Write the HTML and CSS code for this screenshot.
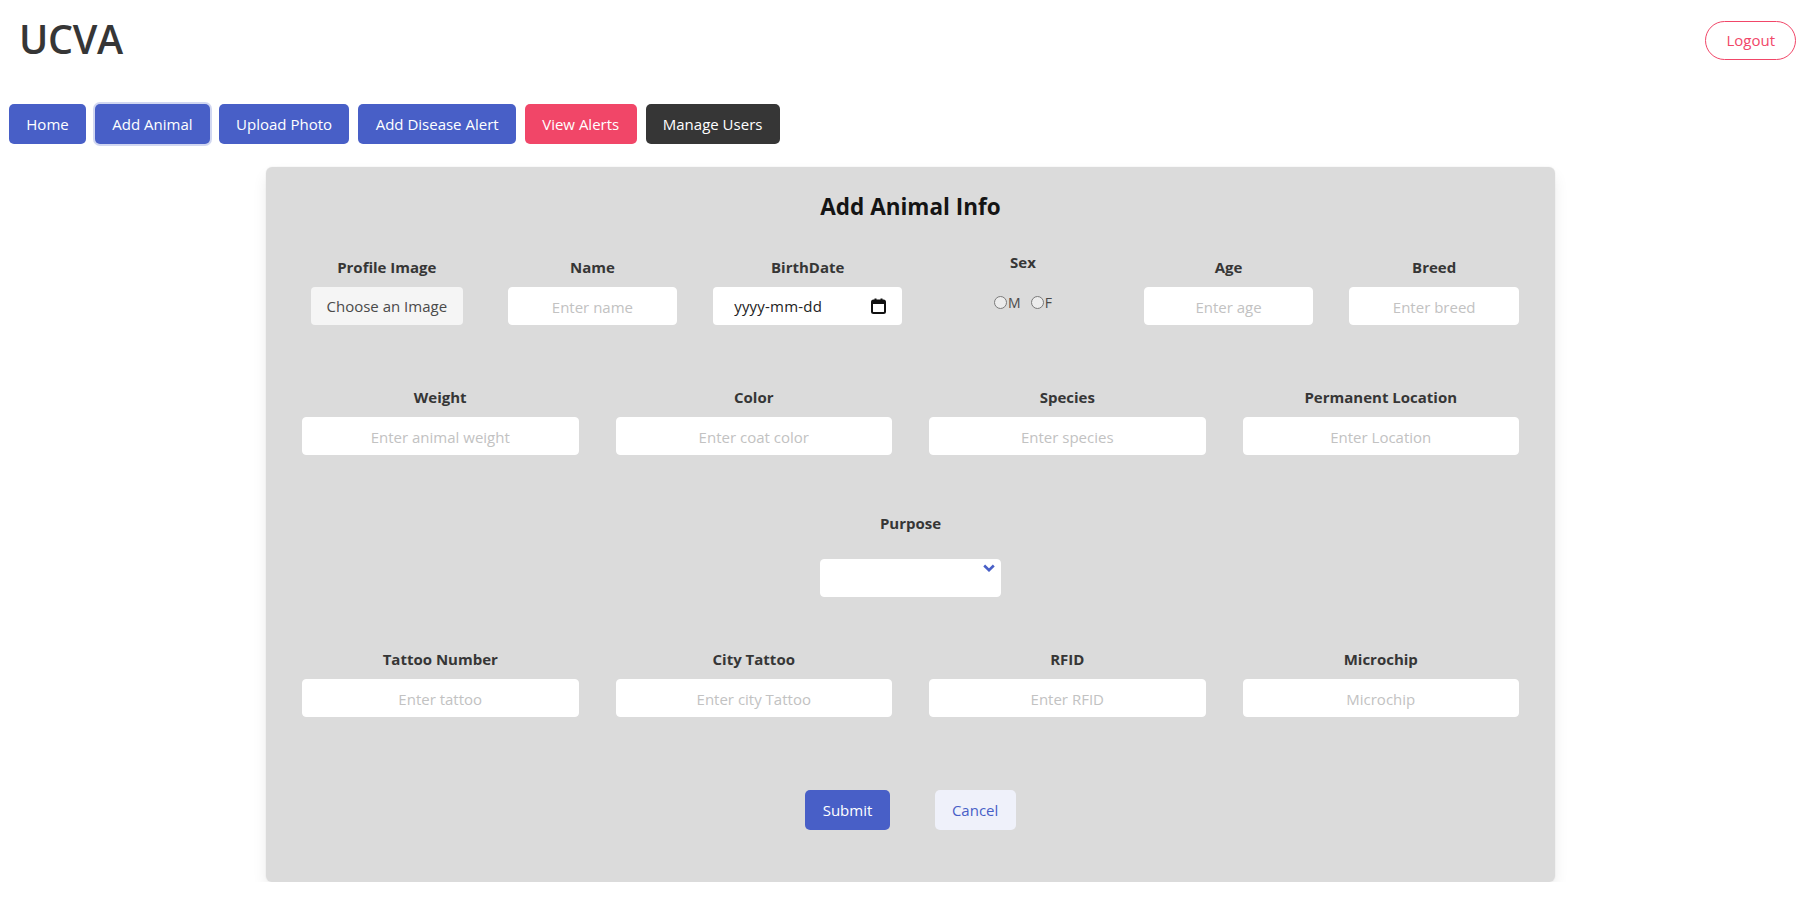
FILE: index.html
```html
<!DOCTYPE html>
<html lang="en">
<head>
<meta charset="utf-8">
<title>UCVA - Add Animal</title>
<link rel="stylesheet" href="styles.css">
</head>
<body>
<header class="topbar">
  <h1 class="brand">UCVA</h1>
  <button class="btn-logout">Logout</button>
</header>
<nav class="nav">
  <button class="btn btn-blue">Home</button>
  <button class="btn btn-blue is-focused">Add Animal</button>
  <button class="btn btn-blue">Upload Photo</button>
  <button class="btn btn-blue">Add Disease Alert</button>
  <button class="btn btn-red">View Alerts</button>
  <button class="btn btn-dark">Manage Users</button>
</nav>
<main class="main">
  <section class="card">
    <h2 class="card-title">Add Animal Info</h2>
    <div class="row row-six">
      <div class="field">
        <label class="label">Profile Image</label>
        <span class="file-cta">Choose an Image</span>
      </div>
      <div class="field">
        <label class="label">Name</label>
        <input class="input" type="text" placeholder="Enter name">
      </div>
      <div class="field field-date">
        <label class="label">BirthDate</label>
        <div class="date-box">
          <span class="date-text">yyyy-mm-dd</span>
          <svg class="cal" width="15" height="16" viewBox="0 0 15 16"><rect x="1" y="2.5" width="13" height="12.5" rx="1.5" fill="none" stroke="#111" stroke-width="2"/><rect x="1" y="2.5" width="13" height="3.5" fill="#111"/><rect x="3.5" y="0.5" width="2" height="3" fill="#111"/><rect x="9.5" y="0.5" width="2" height="3" fill="#111"/></svg>
        </div>
      </div>
      <div class="field field-sex">
        <label class="label">Sex</label>
        <div class="radios">
          <label class="radio"><input type="radio" name="sex">M</label>
          <label class="radio"><input type="radio" name="sex">F</label>
        </div>
      </div>
      <div class="field">
        <label class="label">Age</label>
        <input class="input" type="text" placeholder="Enter age">
      </div>
      <div class="field">
        <label class="label">Breed</label>
        <input class="input" type="text" placeholder="Enter breed">
      </div>
    </div>

    <div class="row row-four row-second">
      <div class="field">
        <label class="label">Weight</label>
        <input class="input" type="text" placeholder="Enter animal weight">
      </div>
      <div class="field">
        <label class="label">Color</label>
        <input class="input" type="text" placeholder="Enter coat color">
      </div>
      <div class="field">
        <label class="label">Species</label>
        <input class="input" type="text" placeholder="Enter species">
      </div>
      <div class="field">
        <label class="label">Permanent Location</label>
        <input class="input" type="text" placeholder="Enter Location">
      </div>
    </div>

    <div class="purpose">
      <label class="label">Purpose</label>
      <div class="select-wrap">
        <select class="select"></select>
        <svg class="chev" width="12" height="8" viewBox="0 0 12 8"><polyline points="1.2,1.5 6,6.2 10.8,1.5" fill="none" stroke="#485fc7" stroke-width="2.6"/></svg>
      </div>
    </div>

    <div class="row row-four row-fourth">
      <div class="field">
        <label class="label">Tattoo Number</label>
        <input class="input" type="text" placeholder="Enter tattoo">
      </div>
      <div class="field">
        <label class="label">City Tattoo</label>
        <input class="input" type="text" placeholder="Enter city Tattoo">
      </div>
      <div class="field">
        <label class="label">RFID</label>
        <input class="input" type="text" placeholder="Enter RFID">
      </div>
      <div class="field">
        <label class="label">Microchip</label>
        <input class="input" type="text" placeholder="Microchip">
      </div>
    </div>

    <div class="actions">
      <button class="btn btn-blue">Submit</button>
      <button class="btn btn-light">Cancel</button>
    </div>
  </section>
</main>
</body>
</html>
```

FILE: styles.css
```css
* { box-sizing: border-box; }

html, body {
  margin: 0;
  padding: 0;
  background: #ffffff;
}

body {
  font-family: "Open Sans", "Noto Sans", sans-serif;
  font-size: 15px;
  color: #4a4a4a;
}

.topbar {
  height: 80px;
  display: flex;
  align-items: center;
  justify-content: space-between;
  padding: 0 17px 0 19px;
}

.brand {
  margin: 0;
  font-size: 39.5px;
  line-height: 1;
  font-weight: 600;
  color: #363636;
  letter-spacing: -0.3px;
}

.btn-logout {
  height: 39px;
  padding: 0 20px;
  border: 1px solid #f14668;
  border-radius: 9999px;
  background: #fff;
  color: #f14668;
  font-family: inherit;
  font-size: 15px;
}

.nav {
  display: flex;
  gap: 9px;
  padding-left: 9px;
  margin-top: 24px;
}

.btn {
  height: 40px;
  padding: 0 17.3px;
  border: 0;
  border-radius: 5px;
  font-family: inherit;
  font-size: 15px;
  color: #fff;
  cursor: pointer;
}

.btn-blue { background: #485fc7; }
.btn-red { background: #f14668; }
.btn-dark { background: #363636; }
.btn-light { background: #eff1fa; color: #485fc7; }

.is-focused {
  box-shadow: 0 0 0 2px rgba(72, 95, 199, 0.25);
}

.main {
  padding-left: 8px;
  margin-top: 23px;
}

.card {
  width: 1289px;
  margin: 0 auto;
  background: #dbdbdb;
  border-radius: 6px;
  padding: 26px 36px 52px;
  box-shadow: 0 8px 16px -2px rgba(10, 10, 10, 0.1), 0 0 0 1px rgba(10, 10, 10, 0.02);
}

.card-title {
  margin: 0;
  text-align: center;
  font-size: 22.5px;
  line-height: 27px;
  font-weight: 700;
  color: #141414;
}

.row {
  display: flex;
  align-items: center;
}

.row-six {
  gap: 36px;
  margin-top: 30px;
}

.row-six .field {
  flex: 1 1 0;
}

.row-four {
  gap: 37px;
}

.row-four .field {
  flex: 1 1 0;
}

.row-second { margin-top: 55px; }
.row-fourth { margin-top: 50px; }

.field {
  display: flex;
  flex-direction: column;
  align-items: center;
}

.label {
  display: block;
  font-weight: 700;
  font-size: 15px;
  line-height: 24px;
  color: #363636;
  margin-bottom: 8px;
  white-space: nowrap;
}

.input {
  width: 100%;
  height: 38px;
  border: 1px solid #fff;
  border-radius: 4px;
  background: #fff;
  text-align: center;
  font-family: inherit;
  font-size: 15px;
  color: #363636;
  outline: none;
  padding-top: 2px;
}

.input::placeholder {
  color: #c2c2c2;
}

.file-cta {
  display: flex;
  align-items: center;
  height: 38px;
  padding: 0 16px;
  background: #f5f5f5;
  border-radius: 4px;
  color: #4a4a4a;
  white-space: nowrap;
}

.date-box {
  width: 189px;
  height: 38px;
  background: #fff;
  border-radius: 4px;
  display: flex;
  align-items: center;
  justify-content: space-between;
  padding: 0 16px 0 21px;
}

.date-text {
  color: #222;
  font-size: 15px;
  letter-spacing: 0.2px;
}

.cal { display: block; }

.field-sex .label {
  margin-bottom: 8px;
}

.radios {
  height: 40px;
  margin-bottom: 8px;
  display: flex;
  align-items: center;
  gap: 10px;
}

.radio {
  display: flex;
  align-items: center;
  font-size: 14px;
  color: #4a4a4a;
}

.radio input {
  appearance: none;
  -webkit-appearance: none;
  width: 13px;
  height: 13px;
  margin: 0 1px 0 0;
  border: 1px solid #7a7a7a;
  border-radius: 50%;
  background: #ececec;
}

.purpose {
  margin-top: 56px;
  display: flex;
  flex-direction: column;
  align-items: center;
}

.purpose .label {
  margin-bottom: 24px;
}

.select-wrap {
  position: relative;
  width: 181px;
  height: 38px;
}

.select {
  appearance: none;
  -webkit-appearance: none;
  width: 100%;
  height: 100%;
  border: 1px solid #fff;
  border-radius: 4px;
  background: #fff;
}

.chev {
  position: absolute;
  top: 5px;
  right: 6px;
}

.actions {
  margin-top: 73px;
  display: flex;
  justify-content: center;
  gap: 45px;
}
```
